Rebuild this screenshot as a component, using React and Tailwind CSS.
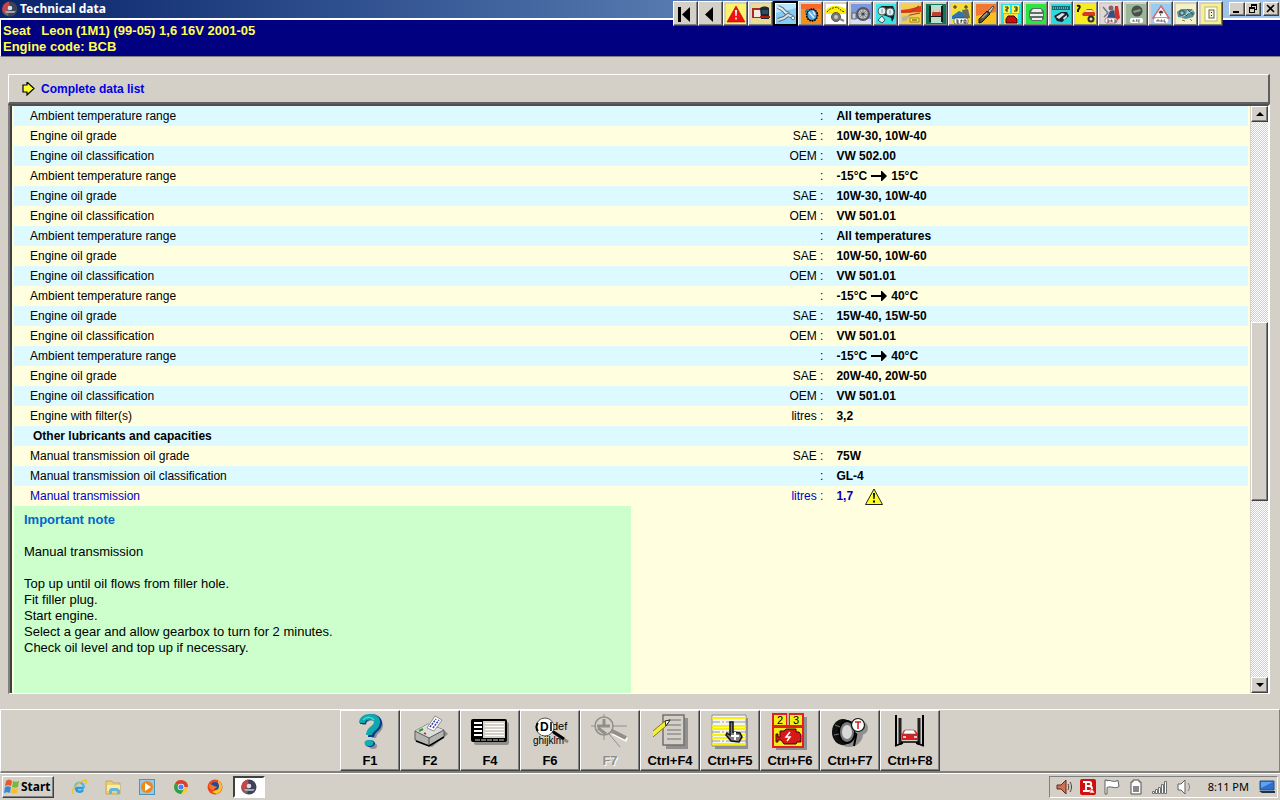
import React from 'react';
import clsx from 'clsx';

const oilRows = [
  { label: 'Ambient temperature range', unit: '', value: 'All temperatures' },
  { label: 'Engine oil grade', unit: 'SAE', value: '10W-30, 10W-40' },
  { label: 'Engine oil classification', unit: 'OEM', value: 'VW 502.00' },
  { label: 'Ambient temperature range', unit: '', from: '-15°C', to: '15°C' },
  { label: 'Engine oil grade', unit: 'SAE', value: '10W-30, 10W-40' },
  { label: 'Engine oil classification', unit: 'OEM', value: 'VW 501.01' },
  { label: 'Ambient temperature range', unit: '', value: 'All temperatures' },
  { label: 'Engine oil grade', unit: 'SAE', value: '10W-50, 10W-60' },
  { label: 'Engine oil classification', unit: 'OEM', value: 'VW 501.01' },
  { label: 'Ambient temperature range', unit: '', from: '-15°C', to: '40°C' },
  { label: 'Engine oil grade', unit: 'SAE', value: '15W-40, 15W-50' },
  { label: 'Engine oil classification', unit: 'OEM', value: 'VW 501.01' },
  { label: 'Ambient temperature range', unit: '', from: '-15°C', to: '40°C' },
  { label: 'Engine oil grade', unit: 'SAE', value: '20W-40, 20W-50' },
  { label: 'Engine oil classification', unit: 'OEM', value: 'VW 501.01' },
  { label: 'Engine with filter(s)', unit: 'litres', value: '3,2' },
  { section: 'Other lubricants and capacities' },
  { label: 'Manual transmission oil grade', unit: 'SAE', value: '75W' },
  { label: 'Manual transmission oil classification', unit: '', value: 'GL-4' },
  { label: 'Manual transmission', unit: 'litres', value: '1,7', warning: true },
];

const noteLines = [
  'Top up until oil flows from filler hole.',
  'Fit filler plug.',
  'Start engine.',
  'Select a gear and allow gearbox to turn for 2 minutes.',
  'Check oil level and top up if necessary.',
];

const raised =
  'bg-[#d4d0c8] border border-t-white border-l-white border-r-[#404040] border-b-[#404040] shadow-[inset_-1px_-1px_0_#808080]';

/* Top toolbar, 20x20 artwork */
const modules = [
  {
    name: 'First',
    art: <path d="M2 3h3v15H2zM14 3v15L6 10.5z" fill="#000" />,
  },
  {
    name: 'Previous',
    art: <path d="M12 3v15L4 10.5z" fill="#000" />,
  },
  {
    name: 'Warnings',
    art: (
      <>
        <rect width="20" height="20" fill="#fbf36a" />
        <path d="M10 2l9 16H1z" fill="#f01010" stroke="#b00" strokeWidth="0.6" />
        <path d="M9 6h2l-.4 6H9.400zM9.200 13.500h1.600v2H9.200z" fill="#fff" />
      </>
    ),
  },
  {
    name: 'Key data',
    art: (
      <>
        <rect width="20" height="20" fill="#e8dc98" />
        <path d="M1 4h10v10H1z" fill="#a82c18" />
        <path d="M3 6h7v7H3z" fill="#f4e8e8" />
        <path d="M9 4c2-2 7-2 9 0v11h-8z" fill="#1c2634" />
        <path d="M11 6h6v4h-6z" fill="#304c60" />
        <path d="M9 12h10v2H9z" fill="#b02010" />
      </>
    ),
  },
  {
    name: 'Technical data',
    active: true,
    art: (
      <>
        <rect width="20" height="20" fill="#84ccf4" />
        <path d="M0 0h20v4L0 9z" fill="#b8e4fc" />
        <path d="M2 3l4 2 4 4 3 1" fill="none" stroke="#5c7084" strokeWidth="4" />
        <path d="M2 3l4 2 4 4 3 1" fill="none" stroke="#e4f0f4" strokeWidth="2" />
        <path d="M2 16l6-2 4-3 5 2" fill="none" stroke="#506880" strokeWidth="4" />
        <path d="M2 16l6-2 4-3 5 2" fill="none" stroke="#d0e0e8" strokeWidth="2" />
        <circle cx="17" cy="14" r="1.800" fill="#e8f0f4" stroke="#607888" />
      </>
    ),
  },
  {
    name: 'Timing belts',
    art: (
      <>
        <rect width="20" height="20" fill="#f09020" />
        <path d="M0 0h20v5H0z" fill="#f86828" />
        <ellipse cx="11" cy="11" rx="5.500" ry="6" fill="#182848" strokeDasharray="1.500 1" stroke="#000" strokeWidth="1.500" />
        <ellipse cx="11" cy="11" rx="4.500" ry="5" fill="#58a8e0" />
        <path d="M8 8l5 6M12 7l2 4" stroke="#d8f0fc" strokeWidth="1.600" />
        <path d="M5 6h3M5 6v3" stroke="#3080b0" strokeWidth="2" />
      </>
    ),
  },
  {
    name: 'Service adjustments',
    art: (
      <>
        <rect width="20" height="20" fill="#fff" />
        <path d="M0 6c4-6 14-5 20-1v5H0z" fill="#fff000" />
        <path d="M1 8c4-5 8-4 10-5l5 4 3 1" fill="none" stroke="#404000" strokeDasharray="2 1" />
        <circle cx="10" cy="13" r="4.500" fill="#777" stroke="#555" />
        <circle cx="10" cy="13" r="2" fill="#c8c8c8" />
        <path d="M14 15l4 2" stroke="#888" strokeWidth="2" />
      </>
    ),
  },
  {
    name: 'Wheels and tyres',
    art: (
      <>
        <rect width="20" height="20" fill="#7c98e0" />
        <path d="M0 15h20v5H0z" fill="#d8e0f8" />
        <rect x="1" y="9" width="4" height="6" fill="#c8d0e0" stroke="#505868" strokeWidth=".8" />
        <circle cx="12" cy="10" r="7" fill="#585858" />
        <circle cx="12" cy="10" r="4.800" fill="#c0c4c8" />
        <path d="M12 5v10M7 10h10M8.500 6.500l7 7M15.500 6.500l-7 7" stroke="#70747c" strokeWidth=".8" />
        <circle cx="12" cy="10" r="1.500" fill="#404448" />
      </>
    ),
  },
  {
    name: 'Auxiliary drive belts',
    art: (
      <>
        <rect width="20" height="20" fill="#38e4e8" />
        <path d="M5 2h12l2 5-1 7-2 4-1-4-5-2-7-2z" fill="#202020" />
        <circle cx="6" cy="7" r="4" fill="#e0f0f0" stroke="#506060" />
        <circle cx="14" cy="8" r="4" fill="#e0f0f0" stroke="#506060" />
        <path d="M6 12l3 4-3 3-4-3z" fill="#e0f0f0" stroke="#405860" />
        <path d="M6 5v4M14 6v4" stroke="#80a0a0" />
      </>
    ),
  },
  {
    name: 'Wheel alignment',
    art: (
      <>
        <rect width="20" height="20" fill="#f8cc50" />
        <path d="M0 6l8-1L20 2v6L0 9z" fill="#e83820" />
        <path d="M1 8h9l8-6M3 16l6-5 10-2" fill="none" stroke="#904828" strokeWidth="1.200" />
        <path d="M1 13l8-2-4 6H1z" fill="#b8b890" />
        <path d="M9 14h9v4H9z" fill="#fff050" stroke="#807020" strokeWidth=".8" />
        <path d="M11 16h5" stroke="#504000" />
      </>
    ),
  },
  {
    name: 'Lifting points',
    art: (
      <>
        <rect width="20" height="20" fill="#107858" />
        <path d="M5 1h11v18H5z" fill="#b8e0cc" />
        <path d="M3 2h2v16H3zM15 2h2v16h-2z" fill="#102020" />
        <path d="M6 9l2-3h5l2 3v4H6z" fill="#c04030" />
        <path d="M8 6h5l1 2H7z" fill="#f0c8c0" />
        <path d="M5 12h10v1H5z" fill="#181818" />
      </>
    ),
  },
  {
    name: 'Parking brake',
    art: (
      <>
        <rect width="20" height="20" fill="#f8dc38" />
        <path d="M1 12l7-5 5 2 2 3v3H1z" fill="#2878b0" />
        <path d="M11 6l6-1 2 9-6 1z" fill="#686c60" />
        <path d="M4 1v4M2 3h4M15 1v4M13 3h4" stroke="#303020" />
        <rect x="3" y="14" width="14" height="6" rx="2" fill="#fff" stroke="#333" strokeWidth=".6" />
        <path d="M6 15v4h2M6 17h2M10 19v-3h1v1h-1M13 19v-3h2v3h-2" fill="none" stroke="#111" strokeWidth=".8" />
      </>
    ),
  },
  {
    name: 'Keys',
    art: (
      <>
        <rect width="20" height="20" fill="#f07830" />
        <path d="M0 20V12L20 8v12z" fill="#f8c020" />
        <path d="M3 15L11 7l3 3-8 8-3 1z" fill="#505048" stroke="#181818" />
        <path d="M12 7l5-5 1 1-4 6z" fill="#c8c8c8" stroke="#333" strokeWidth=".8" />
        <path d="M6 14l5-5" stroke="#a0a090" strokeWidth="1.400" />
      </>
    ),
  },
  {
    name: 'Engine management',
    art: (
      <>
        <rect width="20" height="20" fill="#20e8e8" />
        <path d="M2 1h7v8H2zM11 1h7v8h-7z" fill="#fff450" />
        <path d="M4 3h3v2H5v2h2M13 3h3v4h-3M14 5h2" fill="none" stroke="#202000" />
        <path d="M3 10h14v10H3z" fill="#f8e440" />
        <path d="M5 15l2-3h6l3 3v4H5z" fill="#c81010" stroke="#400" />
      </>
    ),
  },
  {
    name: 'Diagnostics',
    art: (
      <>
        <rect width="20" height="20" fill="#28e840" />
        <path d="M3 7l3-3h9l3 3v8l-3 2H6l-3-3z" fill="#607068" />
        <path d="M5 8l2-3h8l1 3zM4 10h13v2H4zM6 14h10v2H6z" fill="#e8f0e8" />
      </>
    ),
  },
  {
    name: 'Air conditioning',
    art: (
      <>
        <rect width="20" height="20" fill="#30d8dc" />
        <path d="M1 2h18v4H1z" fill="#186870" />
        <path d="M2 4h16" stroke="#b8f0f0" strokeDasharray="1 1" />
        <path d="M3 12l7-4h6l2 4-7 6-5-1z" fill="#182028" />
        <path d="M5 13l6-4 3 1-6 5zM12 14l4-3v2l-3 3z" fill="#d8e4e4" />
      </>
    ),
  },
  {
    name: 'Fault finding',
    art: (
      <>
        <rect width="20" height="20" fill="#f8ec20" />
        <path d="M1 2c3-1 4 1 1 4v2" fill="none" stroke="#181800" strokeWidth="2" />
        <path d="M6 10l5-5h5l3 4v3H7z" fill="#d83820" />
        <path d="M10 6h6l2 2H8z" fill="#f8e8b0" />
        <circle cx="15" cy="15" r="3.500" fill="#303030" />
        <circle cx="15" cy="15" r="1.500" fill="#e0e0c0" />
      </>
    ),
  },
  {
    name: 'Airbags',
    art: (
      <>
        <rect width="20" height="20" fill="#e0d8d8" />
        <path d="M14 2h3l2 12-4 3H8l-1-3 6-1z" fill="#d03028" />
        <circle cx="10" cy="4" r="2.500" fill="#806860" />
        <path d="M9 7l4-1 1 7-8 1z" fill="#305088" />
        <path d="M2 3l5 6-4 4" fill="none" stroke="#707888" strokeWidth="1.500" />
        <rect x="4" y="14" width="12" height="5" rx="2" fill="#fff" stroke="#a04040" strokeWidth=".6" />
        <path d="M6 16h2v2H6M10 18v-2h1v2M13 16h2v2h-2" fill="none" stroke="#333" strokeWidth=".8" />
      </>
    ),
  },
  {
    name: 'Climate control',
    art: (
      <>
        <rect width="20" height="20" fill="#98b898" />
        <circle cx="11" cy="7" r="5.500" fill="#485048" />
        <path d="M7 7l7-2 1 2-7 2z" fill="#8c9890" />
        <rect x="4" y="14" width="13" height="5" rx="2" fill="#fff" />
        <path d="M7 18v-2h1v2M11 15l-1 3M14 16h-2v2h2" fill="none" stroke="#506050" strokeWidth=".8" />
      </>
    ),
  },
  {
    name: 'Anti-lock brakes',
    art: (
      <>
        <rect width="20" height="20" fill="#98ccf0" />
        <path d="M10 2l8 12H2z" fill="#fff" stroke="#d86868" strokeWidth="1.500" />
        <path d="M9 7h2l1 2H8zM9 10c2 1 0 1 1 2" fill="#333" stroke="#444" strokeWidth=".7" />
        <rect x="3" y="14" width="14" height="5" rx="2" fill="#fff" />
        <path d="M6 18v-2h2v2M10 18v-2h1v2M14 16h-1v2h2" fill="none" stroke="#445" strokeWidth=".8" />
      </>
    ),
  },
  {
    name: 'Component locations',
    art: (
      <>
        <rect width="20" height="20" fill="#f4f0c8" />
        <path d="M1 8l4-3h11l3 4-2 4-7 2-8-2z" fill="#589098" />
        <path d="M4 7h4v4H4zM11 5l3 3-4 4M15 8l2 3" fill="#a0c8c8" stroke="#284c54" />
        <path d="M2 15l16-9" stroke="#d8e8d8" strokeDasharray="2 1" />
        <path d="M6 16l3 1M14 15l2 2" stroke="#708060" />
      </>
    ),
  },
  {
    name: 'Electrical data',
    art: (
      <>
        <rect width="20" height="20" fill="#f8f088" />
        <rect x="4" y="3" width="12" height="14" fill="#fffff0" stroke="#b8b48c" />
        <rect x="8" y="6" width="5" height="8" fill="#f8f4d0" stroke="#606050" />
        <path d="M10 8h1v1h-1zM10 11h1v1h-1z" fill="#222" />
      </>
    ),
  },
];

/* Function keys, 40x36 artwork */
const functionKeys = [
  {
    label: 'F1',
    art: (
      <>
        <path d="M14 12c0-8 17-9 17 0 0 7-7 6-7 13" fill="none" stroke="#909090" strokeWidth="4" />
        <path d="M13 11c0-9 16-9 16-1 0 7-8 6-8 14" fill="none" stroke="#083c90" strokeWidth="6" />
        <path d="M12 10c0-8 15-8 15-1 0 7-8 6-8 13" fill="none" stroke="#10a8ac" strokeWidth="6" />
        <ellipse cx="23" cy="33" rx="4" ry="3" fill="#909090" />
        <ellipse cx="20" cy="30.500" rx="5" ry="3.500" fill="#083c90" />
        <ellipse cx="19" cy="30" rx="4.500" ry="3" fill="#10b0b0" />
        <path d="M13 7c4-4 9-3 11 0" fill="none" stroke="#40dcdc" strokeWidth="1.500" />
      </>
    ),
  },
  {
    label: 'F2',
    art: (
      <>
        <path d="M10 30l12 4 16-13-3-3z" fill="#888" />
        <path d="M5 18l13-7 16 6v7L19 33 5 27z" fill="#b4b4b0" stroke="#444" strokeWidth=".8" />
        <path d="M5 18l13-7 16 6-15 8z" fill="#dcdcd8" />
        <path d="M5 18l14 7v8M19 25l15-8" fill="none" stroke="#555" />
        <path d="M6 28l13 5 15-9" fill="none" stroke="#000" strokeWidth="1.500" />
        <path d="M17 15l8-12 7 4-8 11z" fill="#fff" stroke="#555" strokeWidth=".6" />
        <path d="M20 14l6-8M23 15l6-8" stroke="#3038b0" strokeWidth="1.500" strokeDasharray="2 1" />
        <path d="M9 18l4-2" stroke="#28a030" strokeWidth="2" />
        <path d="M14 20l2 1" stroke="#d02020" strokeWidth="1.500" />
      </>
    ),
  },
  {
    label: 'F4',
    art: (
      <>
        <rect x="4" y="9" width="35" height="23" rx="2" fill="#909088" />
        <rect x="1" y="6" width="36" height="23" rx="2" fill="#000" />
        <path d="M4 9h8v2H4zM4 13h8v2H4zM4 17h8v2H4zM4 21h8v2H4z" fill="#fff" />
        <path d="M13 8h22v17H13z" fill="#d4d0c8" />
        <path d="M15 10.500h19M15 13.500h19M15 16.500h19M15 19.500h19M15 22.500h19" stroke="#fff" />
        <path d="M5 27h29" stroke="#d4d0c8" strokeDasharray="5 1" />
      </>
    ),
  },
  {
    label: 'F6',
    art: (
      <>
        <text x="22" y="17" fontSize="11" fontWeight="normal" fill="#000">def</text>
        <text x="3" y="31" fontSize="10" fontWeight="normal" fill="#000">ghijklm</text>
        <path d="M24 20l14 9" stroke="#888" strokeWidth="3" />
        <path d="M22 18l12 8" stroke="#000" strokeWidth="3" />
        <circle cx="15" cy="14" r="9" fill="#fff" stroke="#555" />
        <path d="M8 10c-2 2-2 6 0 8" fill="none" stroke="#000" strokeWidth="2" />
        <text x="10" y="18" fontSize="12" fontWeight="bold" fill="#000">D</text>
        <path d="M21 9v9" stroke="#000" strokeWidth="1.500" />
      </>
    ),
  },
  {
    label: 'F7',
    disabled: true,
    art: (
      <g fill="none" stroke="#909088">
        <path d="M14 1v26M1 13h36M19 21l11 13" />
        <circle cx="14" cy="13" r="9" strokeWidth="1.500" fill="#d4d0c8" />
        <path d="M14 6v8M7 13h13M8 15l8 6" strokeWidth="3" />
        <path d="M23 20l14 7" stroke="#fff" strokeWidth="4" />
        <path d="M22 18l14 7" strokeWidth="4" />
      </g>
    ),
  },
  {
    label: 'Ctrl+F4',
    art: (
      <>
        <path d="M16 5h22v31H16z" fill="#909090" />
        <path d="M13 2h21v30H13z" fill="#d4d0c8" stroke="#707070" strokeWidth="1.500" />
        <path d="M19 7h12M17 12h14M17 17h14M17 21h14M17 26h14" stroke="#707070" />
        <path d="M3 18l12-10 5-1-4 6L3 24z" fill="#f4f030" />
        <path d="M3 18l12-10 5-1-4 6L3 24" fill="none" stroke="#807c20" />
        <path d="M15 8l5-1-4 6z" fill="#fff" stroke="#222" />
      </>
    ),
  },
  {
    label: 'Ctrl+F5',
    art: (
      <>
        <path d="M5 5h33v31H5z" fill="#909090" />
        <path d="M2 2h34v31H2z" fill="#f4f4f0" stroke="#909090" />
        <path d="M2 5h34M2 13h34M2 16h34M2 22h34M2 25h34M2 31h34" stroke="#f8f010" strokeWidth="2" />
        <path d="M2 9h34M2 19h34M2 28h34" stroke="#999" strokeDasharray="8 2 2 2 20" />
        <path d="M20 9h3v10l7 1 2 4-3 5-8-1-5-6 1-2 3 2z" fill="#808080" stroke="#111" strokeWidth="1.500" />
        <path d="M25 19v8M21 23h8" stroke="#fff" strokeWidth="2" />
      </>
    ),
  },
  {
    label: 'Ctrl+F6',
    art: (
      <>
        <path d="M6 4h31v33H6z" fill="#909090" />
        <path d="M2 0h32v35H2z" fill="#e02020" />
        <path d="M4 2h12v10H4zM20 2h12v10H20zM4 15h28v18H4z" fill="#f4ee18" />
        <path d="M17 0h2v12h-2z" fill="#c8b090" />
        <text x="7" y="11" fontSize="11" fontWeight="normal" fill="#000">2</text>
        <text x="23" y="11" fontSize="11" fontWeight="normal" fill="#000">3</text>
        <path d="M6 21h2v3h2v-6h4l2-2h10v3h3l2 3v7h-4l-1 2H14l-3-4H8v2H6z" fill="#d81818" stroke="#400" />
        <path d="M20 19l-4 5h4l-3 4" fill="none" stroke="#fff" strokeWidth="1.500" />
      </>
    ),
  },
  {
    label: 'Ctrl+F7',
    art: (
      <>
        <ellipse cx="19" cy="21" rx="14" ry="13" fill="#909090" />
        <ellipse cx="13" cy="19" rx="11" ry="13" fill="#101010" />
        <ellipse cx="17" cy="19" rx="8" ry="11" fill="#787878" stroke="#000" strokeWidth="2" />
        <ellipse cx="17" cy="19" rx="5" ry="7" fill="#d8d8d8" />
        <path d="M5 12l5 2M4 22l5-1" stroke="#777" />
        <path d="M27 18l-3 15" stroke="#000" strokeWidth="2" />
        <circle cx="31" cy="15" r="7" fill="#909090" />
        <circle cx="28" cy="12" r="6.500" fill="#fff" stroke="#111" strokeWidth="1.200" />
        <path d="M25 9h6M28 9v7" stroke="#d02020" strokeWidth="1.500" />
      </>
    ),
  },
  {
    label: 'Ctrl+F8',
    art: (
      <>
        <path d="M6 2v31M33 2v31" stroke="#000" strokeWidth="2" />
        <path d="M10 5v27M29 5v27" stroke="#202020" strokeWidth="3" />
        <path d="M5 33l8-3M34 33l-8-3M11 29h18" stroke="#000" strokeWidth="1.500" />
        <path d="M12 21l2-4h11l3 4v6H12z" fill="#d82020" />
        <path d="M15 17h9l2 4H13z" fill="#fff" stroke="#555" strokeWidth=".6" />
        <path d="M13 24h3M24 24h3" stroke="#fff" strokeWidth="1.500" />
      </>
    ),
  },
];

const DiscIcon = () => (
  <svg viewBox="0 0 16 16" className="size-4 shrink-0" aria-hidden="true">
    <circle cx="8" cy="8" r="7.500" fill="#3c4258" />
    <path d="M8 8L1 12A8 8 0 0 1 7 .500z" fill="#c04848" />
    <path d="M8 8l-7 4a8 8 0 0 0 5 3z" fill="#7c6068" />
    <circle cx="8" cy="7" r="2.300" fill="#d8dce4" />
    <path d="M3 10h11l-2 2H4z" fill="#a4a8b4" />
  </svg>
);

const WarningIcon = () => (
  <svg viewBox="0 0 18 17" className="ml-3 h-[17px] w-[18px]" role="img" aria-label="Important note">
    <path d="M9 1l8.500 15.500H.500z" fill="#ffff20" stroke="#202020" />
    <path d="M8 5h2l-.4 6H8.400zM8 12.500h2v2H8z" fill="#000" />
  </svg>
);

const ArrowIcon = () => (
  <svg viewBox="0 0 16 10" className="ml-1 mr-1 h-2.5 w-4" role="img" aria-label="to">
    <path d="M0 4h10V0h1l5 5-5 5h-1V6H0z" fill="#000" />
  </svg>
);

const quickLaunch = [
  {
    name: 'Internet Explorer',
    art: (
      <>
        <path d="M13 9H5c0 4 5 5 7 2" fill="none" stroke="#2c9ce0" strokeWidth="2.500" />
        <path d="M4 9c0-7 9-7 9 0" fill="none" stroke="#48b8f0" strokeWidth="2.500" />
        <path d="M2 15C-1 11 8 2 15 1c2 1 0 3-1 4" fill="none" stroke="#f0c030" strokeWidth="1.300" />
      </>
    ),
  },
  {
    name: 'Windows Explorer',
    art: (
      <>
        <path d="M1 2h6l1 2h7v11H1z" fill="#ecd070" stroke="#b89c48" strokeWidth=".7" />
        <path d="M2 6h13v6H2z" fill="#f8ecac" />
        <path d="M4 15v-4l2-2h6l3 2v4h-3v-3H7v3z" fill="#60b8e0" />
      </>
    ),
  },
  {
    name: 'Media Player',
    art: (
      <>
        <rect x=".5" y=".5" width="15" height="15" fill="#98c8e8" stroke="#4c94bc" />
        <circle cx="8" cy="8" r="6" fill="#f08818" />
        <path d="M6 4l6 4-6 4z" fill="#fff" />
      </>
    ),
  },
  {
    name: 'Chrome',
    art: (
      <>
        <circle cx="8" cy="8" r="7" fill="#fcc934" />
        <path d="M8 8H15A7 7 0 0 0 2 4.500z" fill="#dc4034" />
        <path d="M8 8L2 4.500A7 7 0 0 0 8 15l3-5z" fill="#28a04c" />
        <circle cx="8" cy="8" r="3.300" fill="#fff" />
        <circle cx="8" cy="8" r="2.600" fill="#4484f0" />
      </>
    ),
  },
  {
    name: 'Firefox',
    art: (
      <>
        <circle cx="8" cy="8" r="7.500" fill="#e84820" />
        <path d="M11 1c6 4 5 12-1 14l-5-2 6-3z" fill="#f8c428" />
        <circle cx="8" cy="7" r="4" fill="#2848a0" />
        <path d="M2 5c2 0 3 1 5 2l3 1c-1 2-3 1-3 3-3 0-5-2-5-6z" fill="#f07820" />
      </>
    ),
  },
];

const tray = [
  {
    name: 'Audio manager',
    art: (
      <>
        <path d="M1 6h4l5-5v14l-5-5H1z" fill="#d07050" stroke="#5c2c20" />
        <path d="M12 5c1 2 1 4 0 6M14 3c2 3 2 7 0 10" fill="none" stroke="#50382c" />
      </>
    ),
  },
  {
    name: 'Antivirus',
    art: (
      <>
        <rect width="16" height="16" rx="2" fill="#d01010" />
        <path d="M3 3h6c3 0 3 4 0 4 4 0 4 5 0 5H3M6 3v9M6 7h3" fill="none" stroke="#fff" strokeWidth="1.800" />
        <path d="M12 10l3 4H9z" fill="#fff" stroke="#d01010" strokeWidth=".6" />
      </>
    ),
  },
  {
    name: 'Action Center',
    art: <path d="M1 15V1h2v1c3-2 5 2 11-.500l1 6c-5 3-7-1-12 1V15z" fill="#fff" stroke="#606060" />,
  },
  {
    name: 'Battery',
    art: (
      <>
        <path d="M5 1h6v2h2v12H3V3h2z" fill="#fff" stroke="#505050" />
        <path d="M5 7h6v6H5z" fill="#888" />
      </>
    ),
  },
  {
    name: 'Network',
    art: (
      <path
        d="M.5 12.500h2v2h-2zM3.500 10.500h2v4h-2zM6.500 8.500h2v6h-2zM9.500 5.500h2v9h-2zM12.500 2.500h2v12h-2z"
        fill="#fff"
        stroke="#707070"
      />
    ),
  },
  {
    name: 'Volume',
    art: (
      <>
        <path d="M2 5h3l4-4v14l-4-4H2z" fill="#fff" stroke="#606060" />
        <path d="M12 4c2 3 2 5 0 8" fill="none" stroke="#808080" />
      </>
    ),
  },
];

const TitleBar = () => (
  <header className="relative">
    <div className="flex h-[18px] items-center gap-0.5 bg-linear-to-r from-[#0a246a] to-[#a6caf0] pl-0.5">
      <DiscIcon />
      <h1 className="font-['Noto_Sans','Open_Sans',sans-serif] text-xs font-bold leading-4 text-white">
        Technical data
      </h1>
    </div>
    <div className="border-b border-l border-t-2 border-b-[#808080] border-l-white border-t-white bg-[#000080] pb-px pl-0.5 pt-[3px] text-[13px] font-bold leading-4 text-[#ffff50]">
      <p className="whitespace-pre">Seat   Leon (1M1) (99-05) 1,6 16V 2001-05</p>
      <p>Engine code: BCB</p>
    </div>

    {/* Module buttons overlap the caption and the vehicle bar */}
    <div className="absolute right-0 top-px flex items-start">
      <div className="flex">
        {modules.map((item) => (
          <button
            key={item.name}
            type="button"
            aria-label={item.name}
            className={clsx(
              'flex size-[25px] items-center justify-center',
              item.active
                ? 'border-2 border-black bg-white'
                : raised
            )}
          >
            <svg viewBox="0 0 20 20" className="size-5 shrink-0">
              {item.art}
            </svg>
          </button>
        ))}
      </div>
      <div className="ml-1.5 mr-px mt-px flex">
        <button type="button" aria-label="Minimize" className={`flex h-3.5 w-4 items-center justify-center ${raised}`}>
          <svg viewBox="0 0 10 10" className="size-2.5"><path d="M1 7h6v2H1z" /></svg>
        </button>
        <button type="button" aria-label="Restore" className={`flex h-3.5 w-4 items-center justify-center ${raised}`}>
          <svg viewBox="0 0 10 10" className="size-2.5">
            <path d="M3 0h6v6H7V5h1V2H4v1H3zM1 3h6v6H1zM2 5v3h4V5z" fillRule="evenodd" />
          </svg>
        </button>
        <button type="button" aria-label="Close" className={`ml-0.5 flex h-3.5 w-4 items-center justify-center ${raised}`}>
          <svg viewBox="0 0 10 10" className="size-2.5"><path d="M1 1l7 7M8 1L1 8" stroke="#000" strokeWidth="1.600" /></svg>
        </button>
      </div>
    </div>
  </header>
);

const DataTable = () => (
  <table className="w-full table-fixed border-collapse text-left text-xs leading-5">
    <colgroup>
      <col className="w-[60%]" />
      <col className="w-[6%]" />
      <col className="w-[34%]" />
    </colgroup>
    <tbody>
      {oilRows.map((row, index) => (
        <tr
          key={index}
          className={clsx('h-5 odd:bg-[#dcfaff] even:bg-[#ffffe0]', row.warning && 'text-[#0000c0]')}
        >
          {row.section ? (
            <th colSpan={3} className="py-0 pl-[19px] font-bold">{row.section}</th>
          ) : (
            <>
              <th scope="row" className="py-0 pl-4 font-normal">{row.label}</th>
              <td className="py-0 pr-[5px] text-right">{row.unit} :</td>
              <td className="py-0 pl-2 font-bold">
                <div className="flex h-5 items-center">
                  {row.from ? (
                    <>
                      {row.from}
                      <ArrowIcon />
                      {row.to}
                    </>
                  ) : (
                    row.value
                  )}
                  {row.warning && <WarningIcon />}
                </div>
              </td>
            </>
          )}
        </tr>
      ))}
    </tbody>
  </table>
);

const ScrollBar = () => (
  <div className="flex w-[17px] flex-col bg-[repeating-conic-gradient(#ffffff_0_25%,#d4d0c8_0_50%)] bg-size-[2px_2px]">
    <button type="button" aria-label="Scroll up" className={`flex h-4 items-center justify-center ${raised}`}>
      <svg viewBox="0 0 8 4" className="h-1 w-2"><path d="M4 0l4 4H0z" /></svg>
    </button>
    <div className="grow-[201] basis-0" />
    <div className={`grow-[177] basis-0 ${raised}`} />
    <div className="grow-[177] basis-0" />
    <button type="button" aria-label="Scroll down" className={`flex h-4 items-center justify-center ${raised}`}>
      <svg viewBox="0 0 8 4" className="h-1 w-2"><path d="M0 0h8L4 4z" /></svg>
    </button>
  </div>
);

const TaskBar = () => (
  <footer className="flex h-[27px] items-center border-t border-white pl-0.5 pr-0.5">
    <button
      type="button"
      className={`flex h-[22px] w-[52px] items-center gap-px pl-px font-['Noto_Sans','Open_Sans',sans-serif] text-xs font-bold ${raised}`}
    >
      <svg viewBox="0 0 16 16" className="size-4 shrink-0">
        <path d="M2 2c2-2 4-2 6 0L7 7C5 6 4 6 1 7z" fill="#e8582c" />
        <path d="M9 2c2 1 4 1 6 0l-1 6c-2 1-4 1-6 0z" fill="#78b83c" />
        <path d="M1 8c2-1 4-1 6 0l-1 6c-2-1-3-1-6 0z" fill="#3c88d0" />
        <path d="M8 9c2 1 4 1 6 0l-1 5c-2 1-4 1-6 0z" fill="#f4c028" />
      </svg>
      Start
    </button>
    <nav aria-label="Quick launch" className="ml-[17px] flex gap-[18px]">
      {quickLaunch.map((item) => (
        <button key={item.name} type="button" aria-label={item.name}>
          <svg viewBox="0 0 16 16" className="size-4">{item.art}</svg>
        </button>
      ))}
    </nav>
    <button
      type="button"
      aria-label="Technical data window"
      className="ml-2.5 flex h-[22px] w-8 items-center justify-center border-2 border-b-white border-l-[#404040] border-r-white border-t-[#404040] bg-white"
    >
      <DiscIcon />
    </button>
    <div className="ml-auto flex h-[22px] items-center border border-b-white border-l-[#808080] border-r-white border-t-[#808080] pl-1.5 pr-0.5">
      <div className="flex gap-2">
        {tray.map((item) => (
          <button key={item.name} type="button" aria-label={item.name}>
            <svg viewBox="0 0 16 16" className="size-4">{item.art}</svg>
          </button>
        ))}
      </div>
      <time className="ml-4 font-['Noto_Sans','Open_Sans',sans-serif] text-[11px]">8:11 PM</time>
      <svg viewBox="0 0 16 14" className="ml-2.5 h-3.5 w-4" aria-hidden="true">
        <path d="M1 1h14v9H1z" fill="#2c70d0" stroke="#285080" />
        <path d="M2 2h12L2 8z" fill="#60a4f0" />
        <path d="M0 11h16v2H3z" fill="#203048" />
      </svg>
    </div>
  </footer>
);

const App = () => {
  return (
    <div className="flex min-h-screen flex-col bg-[#d4d0c8] font-['Liberation_Sans',Arial,sans-serif] text-black">
      <TitleBar />

      <main className="ml-2 mr-2.5 mt-[17px] flex flex-1 flex-col">
        <div className="flex h-[30px] items-center border-b-2 border-l border-r-2 border-t border-b-[#606060] border-l-white border-r-[#606060] border-t-white pl-3">
          <svg viewBox="0 0 14 14" className="size-3.5 shrink-0" aria-hidden="true">
            <path d="M2 3h4V0l7 6.500L6 13V10H2z" fill="#ffff30" stroke="#000" strokeWidth="1.200" />
          </svg>
          <h2 className="ml-1.5 text-xs font-bold text-[#0000e0]">Complete data list</h2>
        </div>

        <div className="flex flex-1 border-b border-l-2 border-r-2 border-t-2 border-b-white border-l-[#808080] border-r-white border-t-[#505050]">
          <div className="flex min-w-0 flex-1 flex-col border-l-2 border-r border-l-[#404040] border-r-[#d4d0c8] bg-[#ffffe0] px-0.5">
            <DataTable />
            <section className="w-1/2 flex-1 bg-[#ccffcc] pb-8 pl-2.5 pt-1.5 text-[13px] leading-4">
              <h3 className="font-bold text-[#0066cc]">Important note</h3>
              <p className="mt-4">Manual transmission</p>
              <div className="mt-4">
                {noteLines.map((line) => (
                  <p key={line}>{line}</p>
                ))}
              </div>
            </section>
          </div>
          <ScrollBar />
        </div>
      </main>

      <div className="mt-[15px] flex justify-center border-b-2 border-l border-r border-t border-b-[#808080] border-l-white border-r-[#808080] border-t-white">
        {functionKeys.map((item) => (
          <button
            key={item.label}
            type="button"
            disabled={item.disabled}
            className={clsx(
              'flex h-[61px] w-[60px] flex-col items-center pt-0.5 text-[13px] font-bold leading-4',
              raised,
              item.disabled && 'text-[#909090] [text-shadow:1px_1px_0_#ffffff]'
            )}
          >
            <svg viewBox="0 0 40 38" className="h-[38px] w-10 shrink-0" aria-hidden="true">
              {item.art}
            </svg>
            <span className="mt-0.5">{item.label}</span>
          </button>
        ))}
      </div>

      <TaskBar />
    </div>
  );
};

export default App;
